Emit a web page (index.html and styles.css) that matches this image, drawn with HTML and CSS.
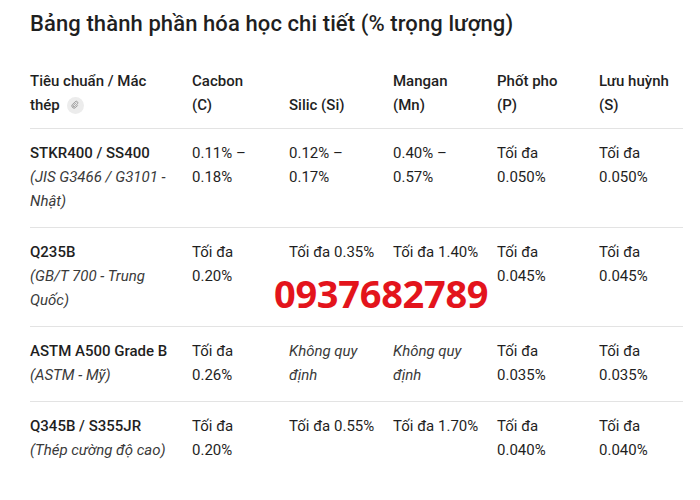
FILE: index.html
```html
<!DOCTYPE html>
<html lang="vi">
<head>
<meta charset="utf-8">
<link rel="stylesheet" href="styles.css">
</head>
<body>
<div class="page">
  <h2 class="title">Bảng thành phần hóa học chi tiết (% trọng lượng)</h2>
  <div class="table-wrap">
    <table class="chem">
      <colgroup>
        <col class="c1"><col class="c2"><col class="c3"><col class="c4"><col class="c5"><col class="c6">
      </colgroup>
      <thead>
        <tr>
          <th>Tiêu chuẩn / Mác<br><span class="nowrap">thép <span class="link-ico"><svg viewBox="0 0 16 16" width="10" height="10"><path d="M9.5 4.5l-4 4a1.4 1.4 0 0 0 2 2l4.5-4.5a2.5 2.5 0 0 0-3.5-3.5L4 7a3.5 3.5 0 0 0 5 5l3-3" fill="none" stroke="#8e8e8e" stroke-width="1.4" stroke-linecap="round"/></svg></span></span></th>
          <th>Cacbon<br>(C)</th>
          <th>Silic (Si)</th>
          <th>Mangan<br>(Mn)</th>
          <th>Phốt pho<br>(P)</th>
          <th>Lưu huỳnh<br>(S)</th>
        </tr>
      </thead>
      <tbody>
        <tr>
          <td><b>STKR400 / SS400</b><br><i>(JIS G3466 / G3101 - Nhật)</i></td>
          <td>0.11% – 0.18%</td>
          <td>0.12% – 0.17%</td>
          <td>0.40% – 0.57%</td>
          <td>Tối đa 0.050%</td>
          <td>Tối đa 0.050%</td>
        </tr>
        <tr>
          <td><b>Q235B</b><br><i>(GB/T 700 - Trung Quốc)</i></td>
          <td>Tối đa 0.20%</td>
          <td>Tối đa 0.35%</td>
          <td>Tối đa 1.40%</td>
          <td>Tối đa 0.045%</td>
          <td>Tối đa 0.045%</td>
        </tr>
        <tr>
          <td><b>ASTM A500 Grade B</b><br><i>(ASTM - Mỹ)</i></td>
          <td>Tối đa 0.26%</td>
          <td><i>Không quy định</i></td>
          <td><i>Không quy định</i></td>
          <td>Tối đa 0.035%</td>
          <td>Tối đa 0.035%</td>
        </tr>
        <tr class="last">
          <td><b>Q345B / S355JR</b><br><i>(Thép cường độ cao)</i></td>
          <td>Tối đa 0.20%</td>
          <td>Tối đa 0.55%</td>
          <td>Tối đa 1.70%</td>
          <td>Tối đa 0.040%</td>
          <td>Tối đa 0.040%</td>
        </tr>
      </tbody>
    </table>
    <div class="phone">0937682789</div>
  </div>
</div>
</body>
</html>
```
FILE: styles.css
```css
html, body {
  margin: 0;
  padding: 0;
  background: #ffffff;
}
body {
  font-family: Roboto, "Noto Sans", sans-serif;
  color: #1f1f1f;
}
.page {
  padding: 10px 17px 0 30px;
}
.title {
  margin: 0;
  font-size: 22px;
  font-weight: 500;
  line-height: 28px;
  letter-spacing: 0.1px;
}
.table-wrap {
  position: relative;
  margin-top: 31px;
}
.chem {
  width: 653px;
  border-collapse: collapse;
  table-layout: fixed;
  font-size: 15px;
  line-height: 24px;
}
.c1 { width: 162px; }
.c2 { width: 97px; }
.c3 { width: 104px; }
.c4 { width: 104px; }
.c5 { width: 102px; }
.c6 { width: 84px; }
.chem th {
  text-align: left;
  font-weight: 500;
  vertical-align: bottom;
  padding: 0 4px 11px 0;
  border-bottom: 1px solid #e3e3e3;
}
.chem td {
  vertical-align: top;
  padding: 12px 14px 14px 0;
  border-bottom: 1px solid #e3e3e3;
}
.chem tr.last td {
  border-bottom: none;
}
.chem b {
  font-weight: 500;
}
.chem i {
  font-style: italic;
  color: #3a3a3a;
}
.nowrap {
  white-space: nowrap;
}
.link-ico {
  display: inline-flex;
  align-items: center;
  justify-content: center;
  width: 17px;
  height: 17px;
  border-radius: 50%;
  background: #ececec;
  vertical-align: middle;
  margin-left: 3px;
  margin-top: -2px;
}
.phone {
  position: absolute;
  left: 244px;
  top: 204px;
  font-family: "Open Sans", sans-serif;
  font-weight: 700;
  font-size: 38px;
  line-height: 40px;
  color: #e3141c;
  letter-spacing: -0.3px;
}
```
